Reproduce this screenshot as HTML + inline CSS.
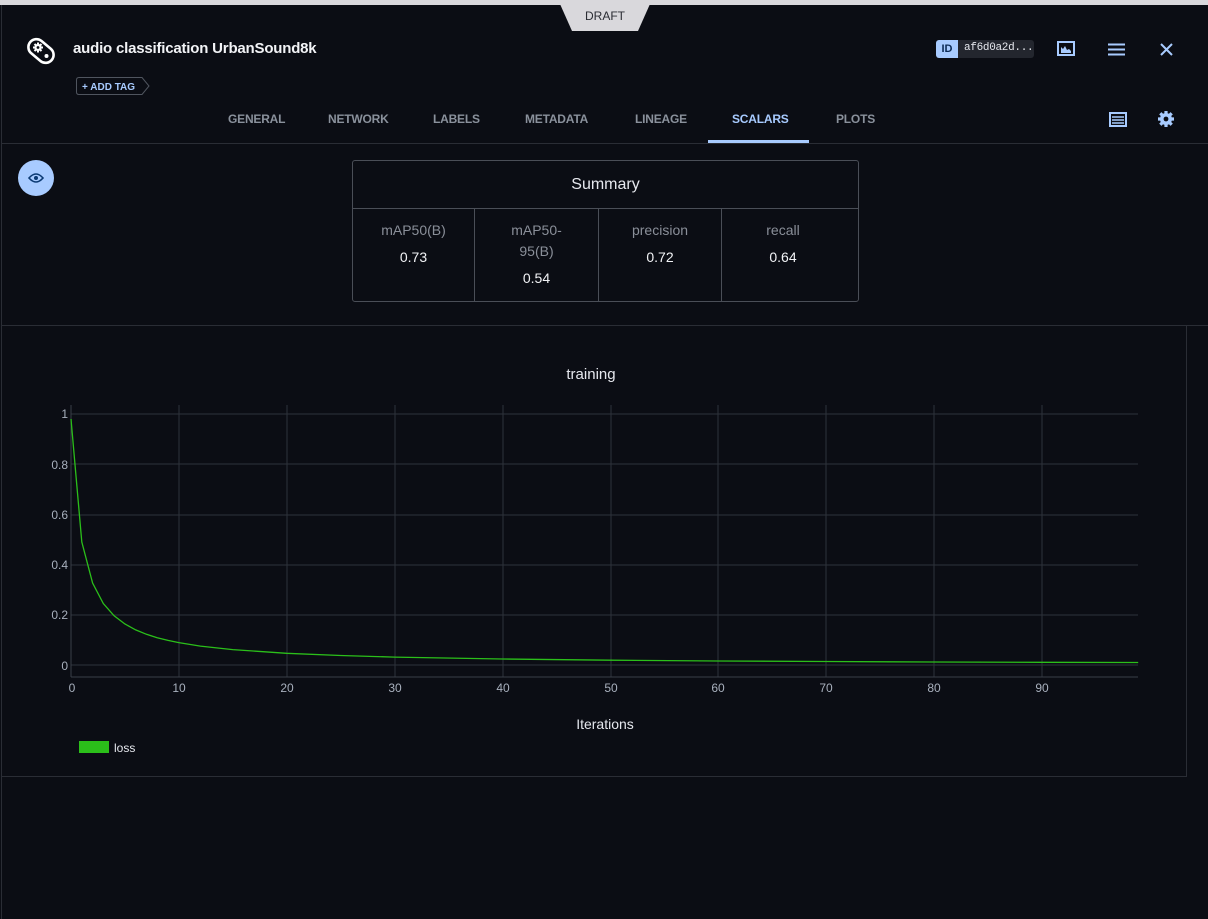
<!DOCTYPE html>
<html><head><meta charset="utf-8"><style>
*{margin:0;padding:0;box-sizing:border-box}
body{width:1208px;height:919px;background:#0b0d14;font-family:"Liberation Sans",Arial,sans-serif;color:#e6e8ee;position:relative;overflow:hidden}
.abs{position:absolute}
.tab{position:absolute;top:112px;font-size:12px;font-weight:bold;color:#8a919c;letter-spacing:-0.2px}
.cell{position:absolute;top:220px;text-align:center;font-size:14px;color:#8a8f99;line-height:21px}
.cell b{display:block;font-weight:normal;color:#f2f3f6;margin-top:6px}
</style></head><body>
<div class="abs" style="left:0;top:0;width:1208px;height:5px;background:#d9d8dc"></div>
<svg class="abs" style="left:558px;top:4px" width="94" height="28"><polygon points="2,0 92,0 80,27 14,27" fill="#d9d8dc"/><text x="47" y="16" text-anchor="middle" font-family="Liberation Sans" font-size="12" fill="#2a2c33">DRAFT</text></svg>
<div class="abs" style="left:1px;top:5px;width:1px;height:914px;background:#2a2d35"></div>

<svg class="abs" style="left:26px;top:35px" width="30" height="32" viewBox="0 0 30 32"><rect x="1" y="8" width="28" height="16" rx="8" transform="rotate(40 15 16)" fill="none" stroke="#fff" stroke-width="2.6"/><circle cx="12" cy="12.5" r="3.6" fill="#fff"/><g stroke="#fff" stroke-width="2"><path d="M12 7.5V17.5M7 12.5H17M8.5 9L15.5 16M15.5 9L8.5 16"/></g><circle cx="12" cy="12.5" r="1.4" fill="#0b0d14"/><circle cx="20.5" cy="21" r="2" fill="#fff"/></svg>
<div class="abs" style="left:73px;top:40px;font-size:15px;font-weight:bold;color:#f2f3f6;letter-spacing:-0.2px">audio classification UrbanSound8k</div>
<svg class="abs" style="left:76px;top:77px" width="76" height="18"><path d="M3 .5H66L73 9L66 17.5H3Q.5 17.5 .5 15V3Q.5 .5 3 .5Z" fill="none" stroke="#50555f"/><text x="6" y="13" font-family="Liberation Sans" font-size="10" font-weight="bold" fill="#a8cbff">+ ADD TAG</text></svg>

<div class="abs" style="left:936px;top:40px;width:98px;height:18px;background:#23262e;border-radius:3px"></div>
<div class="abs" style="left:936px;top:40px;width:22px;height:18px;background:#a8cbff;border-radius:3px 0 0 3px;font-size:11px;font-weight:bold;color:#0b2a55;text-align:center;line-height:18px">ID</div>
<div class="abs" style="left:964px;top:42px;font-family:'Liberation Mono',monospace;font-size:11px;color:#e6e8ee;letter-spacing:-0.3px">af6d0a2d...</div>
<svg class="abs" style="left:1057px;top:41px" width="18" height="16"><rect x="1" y="1" width="16" height="13" fill="none" stroke="#a8cbff" stroke-width="2"/><path d="M4 12V6L6 8L8 5L10 9L12 8L14 10V12Z" fill="#a8cbff"/></svg>
<svg class="abs" style="left:1108px;top:43px" width="17" height="13"><path d="M0 1.5H17M0 6.5H17M0 11.5H17" stroke="#a8cbff" stroke-width="2"/></svg>
<svg class="abs" style="left:1160px;top:43px" width="13" height="13"><path d="M1 1L12 12M12 1L1 12" stroke="#a8cbff" stroke-width="2"/></svg>

<div class="tab" style="left:228px">GENERAL</div>
<div class="tab" style="left:328px">NETWORK</div>
<div class="tab" style="left:433px">LABELS</div>
<div class="tab" style="left:525px">METADATA</div>
<div class="tab" style="left:635px">LINEAGE</div>
<div class="tab" style="left:732px;color:#a8cbff">SCALARS</div>
<div class="tab" style="left:836px">PLOTS</div>
<div class="abs" style="left:708px;top:140px;width:101px;height:3px;background:#a8cbff"></div>
<svg class="abs" style="left:1109px;top:112px" width="18" height="15"><rect x="1" y="1" width="16" height="13" fill="none" stroke="#a8cbff" stroke-width="2"/><path d="M3 5H15M3 8H15M3 11H15" stroke="#a8cbff" stroke-width="1.6"/></svg>
<svg class="abs" style="left:1157px;top:110px" width="18" height="18" viewBox="0 0 18 18"><g stroke="#a8cbff" stroke-width="3.2"><path d="M9 1V17M1 9H17M3.3 3.3L14.7 14.7M14.7 3.3L3.3 14.7"/></g><circle cx="9" cy="9" r="6" fill="#a8cbff"/><circle cx="9" cy="9" r="2.4" fill="#0b0d14"/></svg>
<div class="abs" style="left:2px;top:143px;width:1206px;height:1px;background:#2a2d35"></div>

<div class="abs" style="left:18px;top:160px;width:36px;height:36px;border-radius:50%;background:#a8cbff"></div>
<svg class="abs" style="left:28px;top:172px" width="16" height="12"><path d="M1 6Q8 -2 15 6Q8 14 1 6Z" fill="none" stroke="#0b3a73" stroke-width="1.6"/><circle cx="8" cy="6" r="2" fill="#0b3a73"/></svg>

<div class="abs" style="left:352px;top:160px;width:507px;height:142px;border:1px solid #4a4e57;border-radius:3px"></div>
<div class="abs" style="left:352px;top:176px;width:507px;text-align:center;font-size:16px;color:#e6e8ee">Summary</div>
<div class="abs" style="left:353px;top:208px;width:505px;height:1px;background:#4a4e57"></div>
<div class="abs" style="left:474px;top:209px;width:1px;height:92px;background:#4a4e57"></div>
<div class="abs" style="left:598px;top:209px;width:1px;height:92px;background:#4a4e57"></div>
<div class="abs" style="left:721px;top:209px;width:1px;height:92px;background:#4a4e57"></div>
<div class="cell" style="left:353px;width:121px">mAP50(B)<b>0.73</b></div>
<div class="cell" style="left:475px;width:123px">mAP50-<br>95(B)<b>0.54</b></div>
<div class="cell" style="left:599px;width:122px">precision<b>0.72</b></div>
<div class="cell" style="left:722px;width:122px">recall<b>0.64</b></div>

<div class="abs" style="left:2px;top:325px;width:1206px;height:1px;background:#2a2d35"></div>
<div class="abs" style="left:1186px;top:326px;width:1px;height:450px;background:#2a2d35"></div>
<div class="abs" style="left:2px;top:776px;width:1185px;height:1px;background:#2a2d35"></div>

<svg class="abs" style="left:0;top:326px" width="1186" height="450" font-family="Liberation Sans">
<text x="591" y="53" text-anchor="middle" font-size="15" fill="#e6e8ee">training</text>
<g stroke="#2e323b" stroke-width="1" transform="translate(0,-326)">
<path d="M71 414H1138M71 464H1138M71 515H1138M71 565H1138M71 615H1138M71 665H1138"/>
<path d="M179 405V677M287 405V677M395 405V677M503 405V677M611 405V677M718 405V677M826 405V677M934 405V677M1042 405V677"/>
<path d="M71 677H1138M71 405V677" stroke="#3a3e48"/>
</g>
<g font-size="12" fill="#a8b0bd" text-anchor="end" transform="translate(0,-326)">
<text x="68" y="418">1</text><text x="68" y="469">0.8</text><text x="68" y="519">0.6</text><text x="68" y="569">0.4</text><text x="68" y="619">0.2</text><text x="68" y="670">0</text>
</g>
<g font-size="12" fill="#a8b0bd" text-anchor="middle" transform="translate(0,-326)">
<text x="72" y="692">0</text><text x="179" y="692">10</text><text x="287" y="692">20</text><text x="395" y="692">30</text><text x="503" y="692">40</text><text x="611" y="692">50</text><text x="718" y="692">60</text><text x="826" y="692">70</text><text x="934" y="692">80</text><text x="1042" y="692">90</text>
</g>
<polyline transform="translate(0,-326)" fill="none" stroke="#2bbf1a" stroke-width="1.3" points="71,419 81.8,542 92.6,583 103.3,603.5 114.1,615.8 124.9,624 135.7,629.9 146.5,634.3 157.2,637.7 168,640.4 178.8,642.6 200.4,646.1 232.7,649.6 286.6,653.3 340.5,655.5 394.4,657.1 502.2,659 610,660.2 717.8,661 825.6,661.5 933.4,662 1041.2,662.3 1138.2,662.5"/>
<text x="605" y="403" text-anchor="middle" font-size="14" fill="#e6e8ee">Iterations</text>
<rect x="79" y="415" width="30" height="12" fill="#2bbf1a"/>
<text x="114" y="426" font-size="12" fill="#e6e8ee">loss</text>
</svg>
</body></html>
